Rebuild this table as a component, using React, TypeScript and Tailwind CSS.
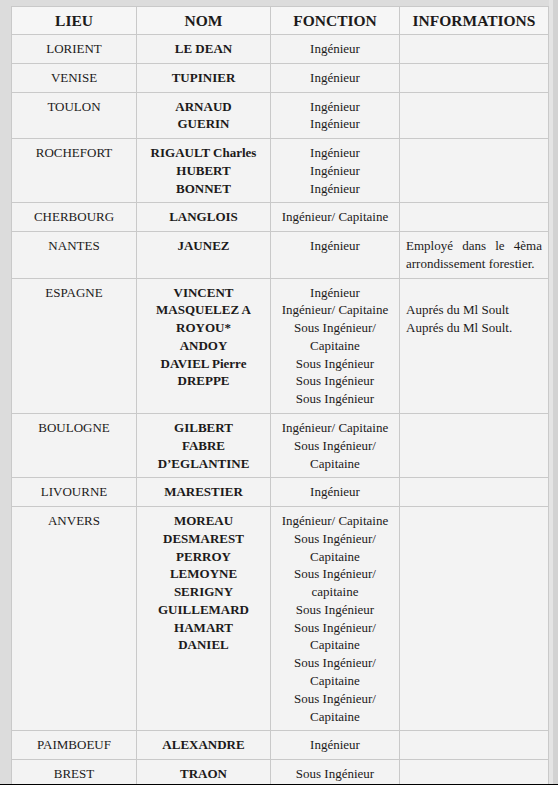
type Row = {
	lieu: string;
	noms: string[];
	fonctions: string[];
	infos?: string[];
	justified?: boolean;
};

const rows: Row[] = [
	{ lieu: "LORIENT", noms: ["LE DEAN"], fonctions: ["Ingénieur"] },
	{ lieu: "VENISE", noms: ["TUPINIER"], fonctions: ["Ingénieur"] },
	{ lieu: "TOULON", noms: ["ARNAUD", "GUERIN"], fonctions: ["Ingénieur", "Ingénieur"] },
	{
		lieu: "ROCHEFORT",
		noms: ["RIGAULT Charles", "HUBERT", "BONNET"],
		fonctions: ["Ingénieur", "Ingénieur", "Ingénieur"],
	},
	{ lieu: "CHERBOURG", noms: ["LANGLOIS"], fonctions: ["Ingénieur/ Capitaine"] },
	{
		lieu: "NANTES",
		noms: ["JAUNEZ"],
		fonctions: ["Ingénieur"],
		infos: ["Employé dans le 4èma", "arrondissement forestier."],
		justified: true,
	},
	{
		lieu: "ESPAGNE",
		noms: ["VINCENT", "MASQUELEZ A", "ROYOU*", "ANDOY", "DAVIEL Pierre", "DREPPE"],
		fonctions: [
			"Ingénieur",
			"Ingénieur/ Capitaine",
			"Sous Ingénieur/",
			"Capitaine",
			"Sous Ingénieur",
			"Sous Ingénieur",
			"Sous Ingénieur",
		],
		infos: ["\u00a0", "Auprés du Ml Soult", "Auprés du Ml Soult."],
	},
	{
		lieu: "BOULOGNE",
		noms: ["GILBERT", "FABRE", "D\u2019EGLANTINE"],
		fonctions: ["Ingénieur/ Capitaine", "Sous Ingénieur/", "Capitaine"],
	},
	{ lieu: "LIVOURNE", noms: ["MARESTIER"], fonctions: ["Ingénieur"] },
	{
		lieu: "ANVERS",
		noms: ["MOREAU", "DESMAREST", "PERROY", "LEMOYNE", "SERIGNY", "GUILLEMARD", "HAMART", "DANIEL"],
		fonctions: [
			"Ingénieur/ Capitaine",
			"Sous Ingénieur/",
			"Capitaine",
			"Sous Ingénieur/",
			"capitaine",
			"Sous Ingénieur",
			"Sous Ingénieur/",
			"Capitaine",
			"Sous Ingénieur/",
			"Capitaine",
			"Sous Ingénieur/",
			"Capitaine",
		],
	},
	{ lieu: "PAIMBOEUF", noms: ["ALEXANDRE"], fonctions: ["Ingénieur"] },
	{ lieu: "BREST", noms: ["TRAON"], fonctions: ["Sous Ingénieur"] },
	{ lieu: "BAYONNE", noms: ["DELESTRE"], fonctions: ["Ingénieur"] },
];

const cell = "border border-[#c9c9c9] px-[6px] py-[5px] align-top font-[Liberation_Serif]";

export default function App() {
	return (
		<div className="w-[558px] h-[795px] bg-white overflow-hidden font-[Liberation_Serif] text-[#1c1a1a]">
			<div className="h-[784px] bg-[#dcdcdc] flex overflow-hidden">
				<div className="pt-[6px] pl-[11px]">
					<table className="table-fixed border-collapse w-[537px] bg-[#f3f3f3] text-[13px] leading-[17.76px] font-[Liberation_Serif]">
						<colgroup>
							<col className="w-[125px]" />
							<col className="w-[134px]" />
							<col className="w-[129px]" />
							<col className="w-[149px]" />
						</colgroup>
						<thead>
							<tr className="bg-[#f6f6f6] text-[15.5px] leading-[17px] font-bold">
								<th className={cell}>LIEU</th>
								<th className={cell}>NOM</th>
								<th className={cell}>FONCTION</th>
								<th className={cell}>INFORMATIONS</th>
							</tr>
						</thead>
						<tbody>
							{rows.map((row) => (
								<tr key={row.lieu}>
									<td className={`${cell} text-center`}>{row.lieu}</td>
									<td className={`${cell} text-center font-bold`}>
										{row.noms.map((n) => (
											<div key={n} className="whitespace-nowrap">
												{n}
											</div>
										))}
									</td>
									<td className={`${cell} text-center`}>
										{row.fonctions.map((f, i) => (
											<div key={i} className="whitespace-nowrap">
												{f}
											</div>
										))}
									</td>
									<td className={`${cell} text-left`}>
										{row.infos?.map((line, i) =>
											row.justified && i === 0 ? (
												<div key={i} className="flex justify-between">
													{line.split(" ").map((w) => (
														<span key={w}>{w}</span>
													))}
												</div>
											) : (
												<div key={i} className="whitespace-nowrap">
													{line}
												</div>
											),
										)}
									</td>
								</tr>
							))}
						</tbody>
					</table>
				</div>
				<div className="ml-auto w-[10px] flex">
					<div className="w-[4px] bg-[#e4e4e4]" />
					<div className="w-[6px] bg-[#d2d2d2]" />
				</div>
			</div>
			<div className="h-px bg-black" />
		</div>
	);
}
